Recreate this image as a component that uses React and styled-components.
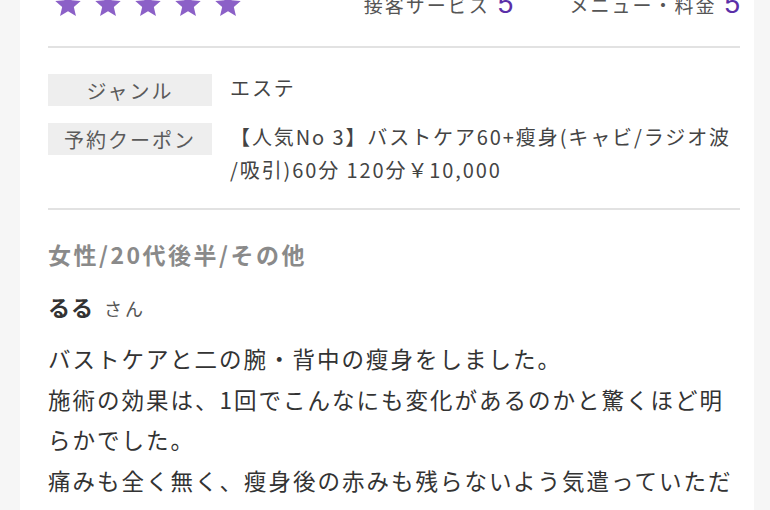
import React from "react";
import styled, { createGlobalStyle } from "styled-components";

const Global = createGlobalStyle`
  html, body { margin: 0; padding: 0; background: #f6f6f6; }
  body { font-family: "Noto Sans CJK JP", "Noto Sans", sans-serif; overflow: hidden; }
  * { box-sizing: border-box; }
`;

const Page = styled.div`
  width: 770px;
  height: 510px;
  overflow: hidden;
  padding: 0 16px 0 20px;
`;

const Card = styled.div`
  background: #fff;
  padding: 0 14px 0 28px;
  height: 600px;
`;

const RatingRow = styled.div`
  display: flex;
  align-items: flex-end;
  height: 30px;
  margin-top: -12px;
`;

const Stars = styled.div`
  display: flex;
  gap: 12px;
  padding-left: 6px;
`;

const Scores = styled.div`
  margin-left: auto;
  display: flex;
  gap: 56px;
  align-items: baseline;
`;

const Score = styled.div`
  display: flex;
  align-items: baseline;
  gap: 8px;
  color: #555;
  font-size: 19px;
  letter-spacing: 2px;
`;

const ScoreNum = styled.span`
  font-family: "Liberation Sans", Arial, sans-serif;
  font-size: 28px;
  color: #5b2fa8;
  line-height: 1;
  letter-spacing: 0;
`;

const Divider = styled.hr`
  border: none;
  height: 2px;
  background: #e2e2e2;
  margin: ${(p) => p.$m || "0"};
`;

const Table = styled.div`
  display: flex;
  flex-direction: column;
  gap: 17px;
  padding: 26px 0 22px;
`;

const Row = styled.div`
  display: flex;
  gap: 18px;
  align-items: flex-start;
`;

const Label = styled.div`
  flex: 0 0 164px;
  height: 32px;
  background: #eeeeee;
  color: #5a5a5a;
  font-size: 20px;
  letter-spacing: 2px;
  display: flex;
  align-items: center;
  justify-content: center;
`;

const Value = styled.div`
  color: #444;
  font-size: 20px;
  line-height: 33px;
  margin-top: -3px;
  letter-spacing: 1.9px;
`;

const Profile = styled.div`
  color: #8a8a8a;
  font-size: 23px;
  font-weight: 700;
  letter-spacing: 2.5px;
  margin-top: 28px;
  line-height: 32px;
`;

const Name = styled.div`
  margin-top: 20px;
  display: flex;
  align-items: baseline;
  gap: 10px;
  line-height: 32px;
`;

const NameMain = styled.span`
  font-size: 22px;
  font-weight: 700;
  color: #333;
  letter-spacing: 1px;
`;

const NameSuffix = styled.span`
  font-size: 18px;
  color: #555;
  letter-spacing: 3px;
`;

const Body = styled.p`
  margin: 14px 0 0;
  color: #333;
  font-size: 22.5px;
  line-height: 40.5px;
  letter-spacing: 2px;
  white-space: pre-line;
`;

const Star = () => (
  <svg width="28" height="27" viewBox="0 0 24 23">
    <path
      d="M12 0.6l3.1 7.2 7.8 0.7-5.9 5.2 1.8 7.7L12 17.3l-6.8 4.1 1.8-7.7L1.1 8.5l7.8-0.7z"
      fill="#8b60c7"
    />
  </svg>
);

export default function App() {
  const body =
    "バストケアと二の腕・背中の瘦身をしました。\n施術の効果は、1回でこんなにも変化があるのかと驚くほど明らかでした。\n痛みも全く無く、瘦身後の赤みも残らないよう気遣っていただきありがとうございました。";
  return (
    <>
      <Global />
      <Page>
        <Card>
          <RatingRow>
            <Stars>
              {[0, 1, 2, 3, 4].map((i) => (
                <Star key={i} />
              ))}
            </Stars>
            <Scores>
              <Score>
                接客サービス<ScoreNum>5</ScoreNum>
              </Score>
              <Score>
                メニュー・料金<ScoreNum>5</ScoreNum>
              </Score>
            </Scores>
          </RatingRow>
          <Divider $m="28px 0 0" />
          <Table>
            <Row>
              <Label>ジャンル</Label>
              <Value>エステ</Value>
            </Row>
            <Row>
              <Label>予約クーポン</Label>
              <Value>
                【人気No 3】バストケア60+瘦身(キャビ/ラジオ波
                <br />
                /吸引)60分 120分￥10,000
              </Value>
            </Row>
          </Table>
          <Divider />
          <Profile>女性/20代後半/その他</Profile>
          <Name>
            <NameMain>るる</NameMain>
            <NameSuffix>さん</NameSuffix>
          </Name>
          <Body>{body}</Body>
        </Card>
      </Page>
    </>
  );
}
